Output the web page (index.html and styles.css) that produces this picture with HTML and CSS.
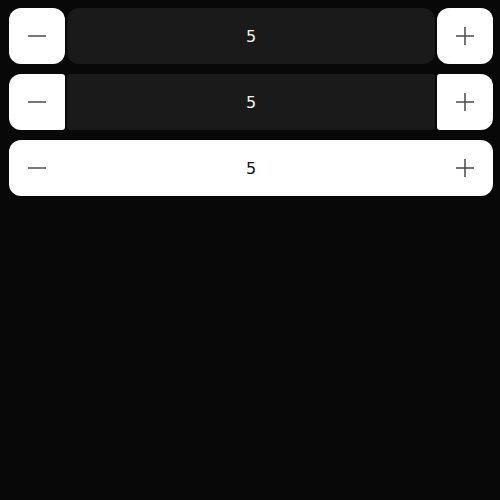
FILE: index.html
```html
<!DOCTYPE html>
<html lang="en">
<head>
    <meta charset="UTF-8">
    <title>Stepper</title>
    <link rel="stylesheet" href="styles.css">
</head>
<body>
    <div class="stack">
        <div class="stepper split">
            <button class="step minus" aria-label="decrease">
                <svg width="20" height="20" viewBox="0 0 20 20"><path d="M1 10H19" /></svg>
            </button>
            <div class="value">5</div>
            <button class="step plus" aria-label="increase">
                <svg width="20" height="20" viewBox="0 0 20 20"><path d="M1 10H19M10 1V19" /></svg>
            </button>
        </div>

        <div class="stepper joined">
            <button class="step minus" aria-label="decrease">
                <svg width="20" height="20" viewBox="0 0 20 20"><path d="M1 10H19" /></svg>
            </button>
            <div class="value">5</div>
            <button class="step plus" aria-label="increase">
                <svg width="20" height="20" viewBox="0 0 20 20"><path d="M1 10H19M10 1V19" /></svg>
            </button>
        </div>

        <div class="stepper solid">
            <button class="step minus" aria-label="decrease">
                <svg width="20" height="20" viewBox="0 0 20 20"><path d="M1 10H19" /></svg>
            </button>
            <div class="value">5</div>
            <button class="step plus" aria-label="increase">
                <svg width="20" height="20" viewBox="0 0 20 20"><path d="M1 10H19M10 1V19" /></svg>
            </button>
        </div>
    </div>
</body>
</html>
```

FILE: styles.css
```css
html {
    background: #080808;
}

body {
    margin: 0;
    padding: 8px 7px 8px 9px;
    font-family: "DejaVu Sans", sans-serif;
}

.stack {
    display: flex;
    flex-direction: column;
    gap: 10px;
}

.stepper {
    display: flex;
    gap: 2px;
    height: 56px;
}

.step {
    width: 56px;
    flex: none;
    display: flex;
    align-items: center;
    justify-content: center;
    padding: 0;
    border: none;
    background: #fff;
    border-radius: 12px;
    cursor: pointer;
}

.step svg path {
    fill: none;
    stroke: #4a4a4a;
    stroke-width: 1.5;
}

.value {
    flex: 1;
    display: flex;
    align-items: center;
    justify-content: center;
    background: #1a1a1a;
    color: #f2f2f2;
    font-size: 16px;
    border-radius: 12px;
}

.joined .minus {
    border-radius: 12px 3px 3px 12px;
}

.joined .plus {
    border-radius: 3px 12px 12px 3px;
}

.joined .value {
    border-radius: 3px;
}

.solid {
    gap: 0;
    background: #fff;
    border-radius: 12px;
}

.solid .step,
.solid .value {
    background: transparent;
    border-radius: 0;
}

.solid .value {
    color: #111;
}
```
